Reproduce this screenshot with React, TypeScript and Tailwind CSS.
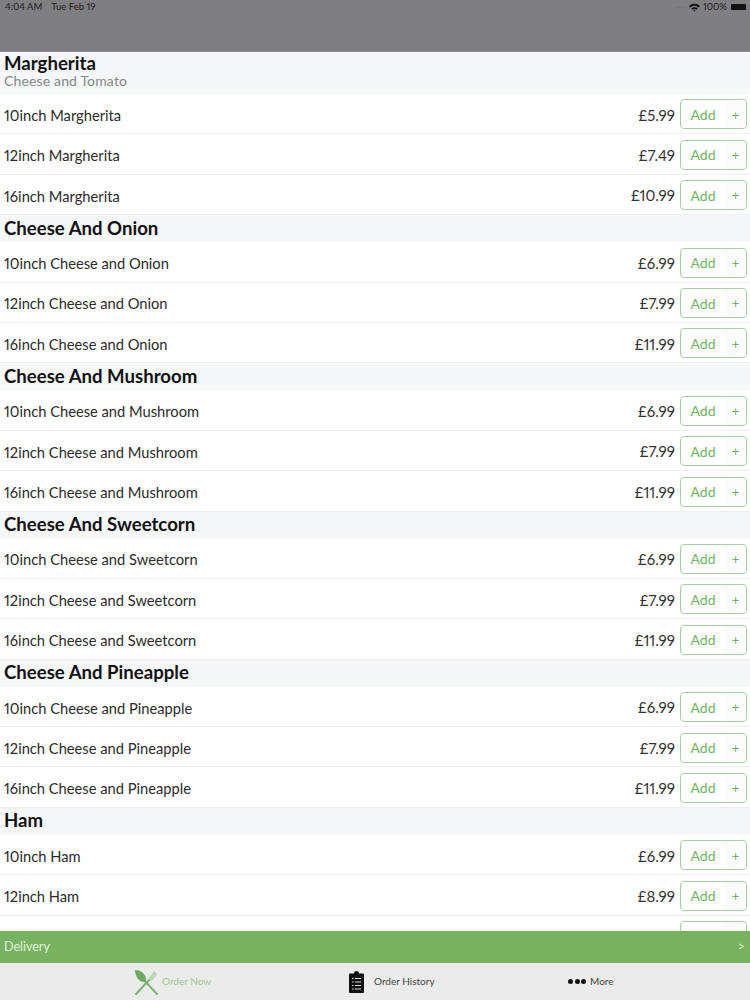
const FONT = "font-['Lato','Liberation_Sans',sans-serif] proportional-nums";

const sections = [
  {
    title: 'Margherita',
    subtitle: 'Cheese and Tomato',
    items: [
      ['10inch Margherita', '£5.99'],
      ['12inch Margherita', '£7.49'],
      ['16inch Margherita', '£10.99'],
    ],
  },
  {
    title: 'Cheese And Onion',
    items: [
      ['10inch Cheese and Onion', '£6.99'],
      ['12inch Cheese and Onion', '£7.99'],
      ['16inch Cheese and Onion', '£11.99'],
    ],
  },
  {
    title: 'Cheese And Mushroom',
    items: [
      ['10inch Cheese and Mushroom', '£6.99'],
      ['12inch Cheese and Mushroom', '£7.99'],
      ['16inch Cheese and Mushroom', '£11.99'],
    ],
  },
  {
    title: 'Cheese And Sweetcorn',
    items: [
      ['10inch Cheese and Sweetcorn', '£6.99'],
      ['12inch Cheese and Sweetcorn', '£7.99'],
      ['16inch Cheese and Sweetcorn', '£11.99'],
    ],
  },
  {
    title: 'Cheese And Pineapple',
    items: [
      ['10inch Cheese and Pineapple', '£6.99'],
      ['12inch Cheese and Pineapple', '£7.99'],
      ['16inch Cheese and Pineapple', '£11.99'],
    ],
  },
  {
    title: 'Ham',
    items: [
      ['10inch Ham', '£6.99'],
      ['12inch Ham', '£8.99'],
      ['16inch Ham', '£9.99'],
    ],
  },
];

function AddButton() {
  return (
    <button
      type="button"
      className="flex h-[30px] w-[67px] shrink-0 items-center rounded-[4px] border border-[#a5d0a0] bg-white text-[#6fb565]"
    >
      <span className="flex-1 text-center text-[14px]">Add</span>
      <span className="flex h-full w-[21px] items-center justify-center rounded-r-[4px] bg-[#fafbfa] pt-[2px] text-[13px]">+</span>
    </button>
  );
}

function MenuRow({ name, price }: { name: string; price: string }) {
  return (
    <div className="flex h-[40.4px] shrink-0 items-center border-b border-[#eeeeee] bg-white pl-[4px] pr-[3px] pt-[1.5px]">
      <span className="flex-1 pt-[1px] text-[14.7px] text-[#2b2b2b]">{name}</span>
      <span className="mr-[5px] pt-[1px] text-[15px] text-[#333333]">{price}</span>
      <AddButton />
    </div>
  );
}

function SectionHeader({ title, subtitle }: { title: string; subtitle?: string }) {
  return (
    <div className={`flex shrink-0 flex-col justify-center bg-[#f5f7f8] px-[4px] ${subtitle ? 'h-[42px] pb-[5px]' : 'h-[27px] pb-[2px]'}`}>
      <div className="text-[18.6px] leading-[20px] font-bold text-[#111111]">{title}</div>
      {subtitle && <div className="text-[14px] leading-[15px] tracking-[0.15px] text-[#85888a]">{subtitle}</div>}
    </div>
  );
}

function ForkSpoonIcon() {
  return (
    <svg width="24" height="26" viewBox="0 0 24 26" aria-hidden="true">
      <path d="M2 25 L17 9" stroke="#7ab56f" strokeWidth="2" strokeLinecap="round" />
      <path d="M23 25 L8 9" stroke="#7ab56f" strokeWidth="2" strokeLinecap="round" />
      <path d="M1 1 C7 1 13 5 12 13 C6 14 1 8 1 1 Z" fill="#6fa863" />
      <path d="M20 2 L23 5 L19 11 C17 12 15 11 15 9 Z" fill="#b9d8b3" />
    </svg>
  );
}

function ClipboardIcon() {
  return (
    <svg width="15" height="22" viewBox="0 0 15 22" aria-hidden="true">
      <path d="M0 3.5 C0 3 .5 2.5 1 2.5 H5 C5 1 6 0 7.5 0 S10 1 10 2.5 H14 C14.500 2.500 15 3 15 3.500 V21 C15 21.500 14.500 22 14 22 H1 C.5 22 0 21.500 0 21 Z" fill="#111111" />
      <path d="M3 7.5 H4.500 M6 7.500 H12 M3 11 H4.500 M6 11 H12 M3 14.500 H4.500 M6 14.500 H12 M3 18 H4.500 M6 18 H12" stroke="#d8d8d8" strokeWidth="1" />
    </svg>
  );
}

function WifiIcon() {
  return (
    <svg width="11" height="9" viewBox="0 0 12 9" aria-hidden="true">
      <path d="M0 3 C3.500 -.5 8.500 -.5 12 3 L10.500 4.500 C7.800 2 4.200 2 1.500 4.500 Z M2.500 5.500 C4.500 3.700 7.500 3.700 9.500 5.500 L8 7 C7 6 5 6 4 7 Z M5 8 C5.500 7.500 6.500 7.500 7 8 L6 9 Z" fill="#111111" />
    </svg>
  );
}

function StatusBar() {
  return (
    <div className="flex h-[52px] shrink-0 items-start justify-between border-b border-[#8f8f90] bg-[#7f7e80] pl-[5px] pr-[4px] pt-[1px] text-[9.5px] text-[#222222]">
      <div className="flex gap-[9px] leading-[12px]">
        <span>4:04 AM</span>
        <span>Tue Feb 19</span>
      </div>
      <div className="flex items-center gap-[3px] leading-[12px]">
        <span className="mr-[1px] text-[#747375]">····</span>
        <WifiIcon />
        <span>100%</span>
        <span className="ml-[1px] h-[6px] w-[15px] rounded-[1px] bg-[#111111]" />
      </div>
    </div>
  );
}

export default function App() {
  return (
    <div className={`flex h-[1000px] w-[750px] flex-col overflow-hidden bg-white ${FONT}`}>
      <StatusBar />

      {/* Menu list */}
      <div className="flex min-h-0 flex-1 flex-col overflow-hidden">
        {sections.map((section) => (
          <div key={section.title} className="flex shrink-0 flex-col">
            <SectionHeader title={section.title} subtitle={section.subtitle} />
            {section.items.map(([name, price]) => (
              <MenuRow key={name} name={name} price={price} />
            ))}
          </div>
        ))}
      </div>

      {/* Delivery bar */}
      <div className="flex h-[32px] shrink-0 items-center justify-between bg-[#76b25f] pl-[4px] pr-[5px] text-[12.5px] text-[#e6f2e0]">
        <span>Delivery</span>
        <span>&gt;</span>
      </div>

      {/* Tab bar */}
      <nav className="flex h-[37px] shrink-0 items-center bg-[#ebebeb] text-[10px]">
        <div className="ml-[134px] flex w-[215px] items-center gap-[4px] text-[#9cc692]">
          <ForkSpoonIcon />
          <span>Order Now</span>
        </div>
        <div className="flex w-[219px] items-center gap-[10px] text-[#444444]">
          <ClipboardIcon />
          <span>Order History</span>
        </div>
        <div className="flex items-center gap-[4px] text-[#444444]">
          <span className="flex gap-[1.500px]">
            <span className="h-[5px] w-[5px] rounded-full bg-[#111111]" />
            <span className="h-[5px] w-[5px] rounded-full bg-[#111111]" />
            <span className="h-[5px] w-[5px] rounded-full bg-[#111111]" />
          </span>
          <span>More</span>
        </div>
      </nav>
    </div>
  );
}
